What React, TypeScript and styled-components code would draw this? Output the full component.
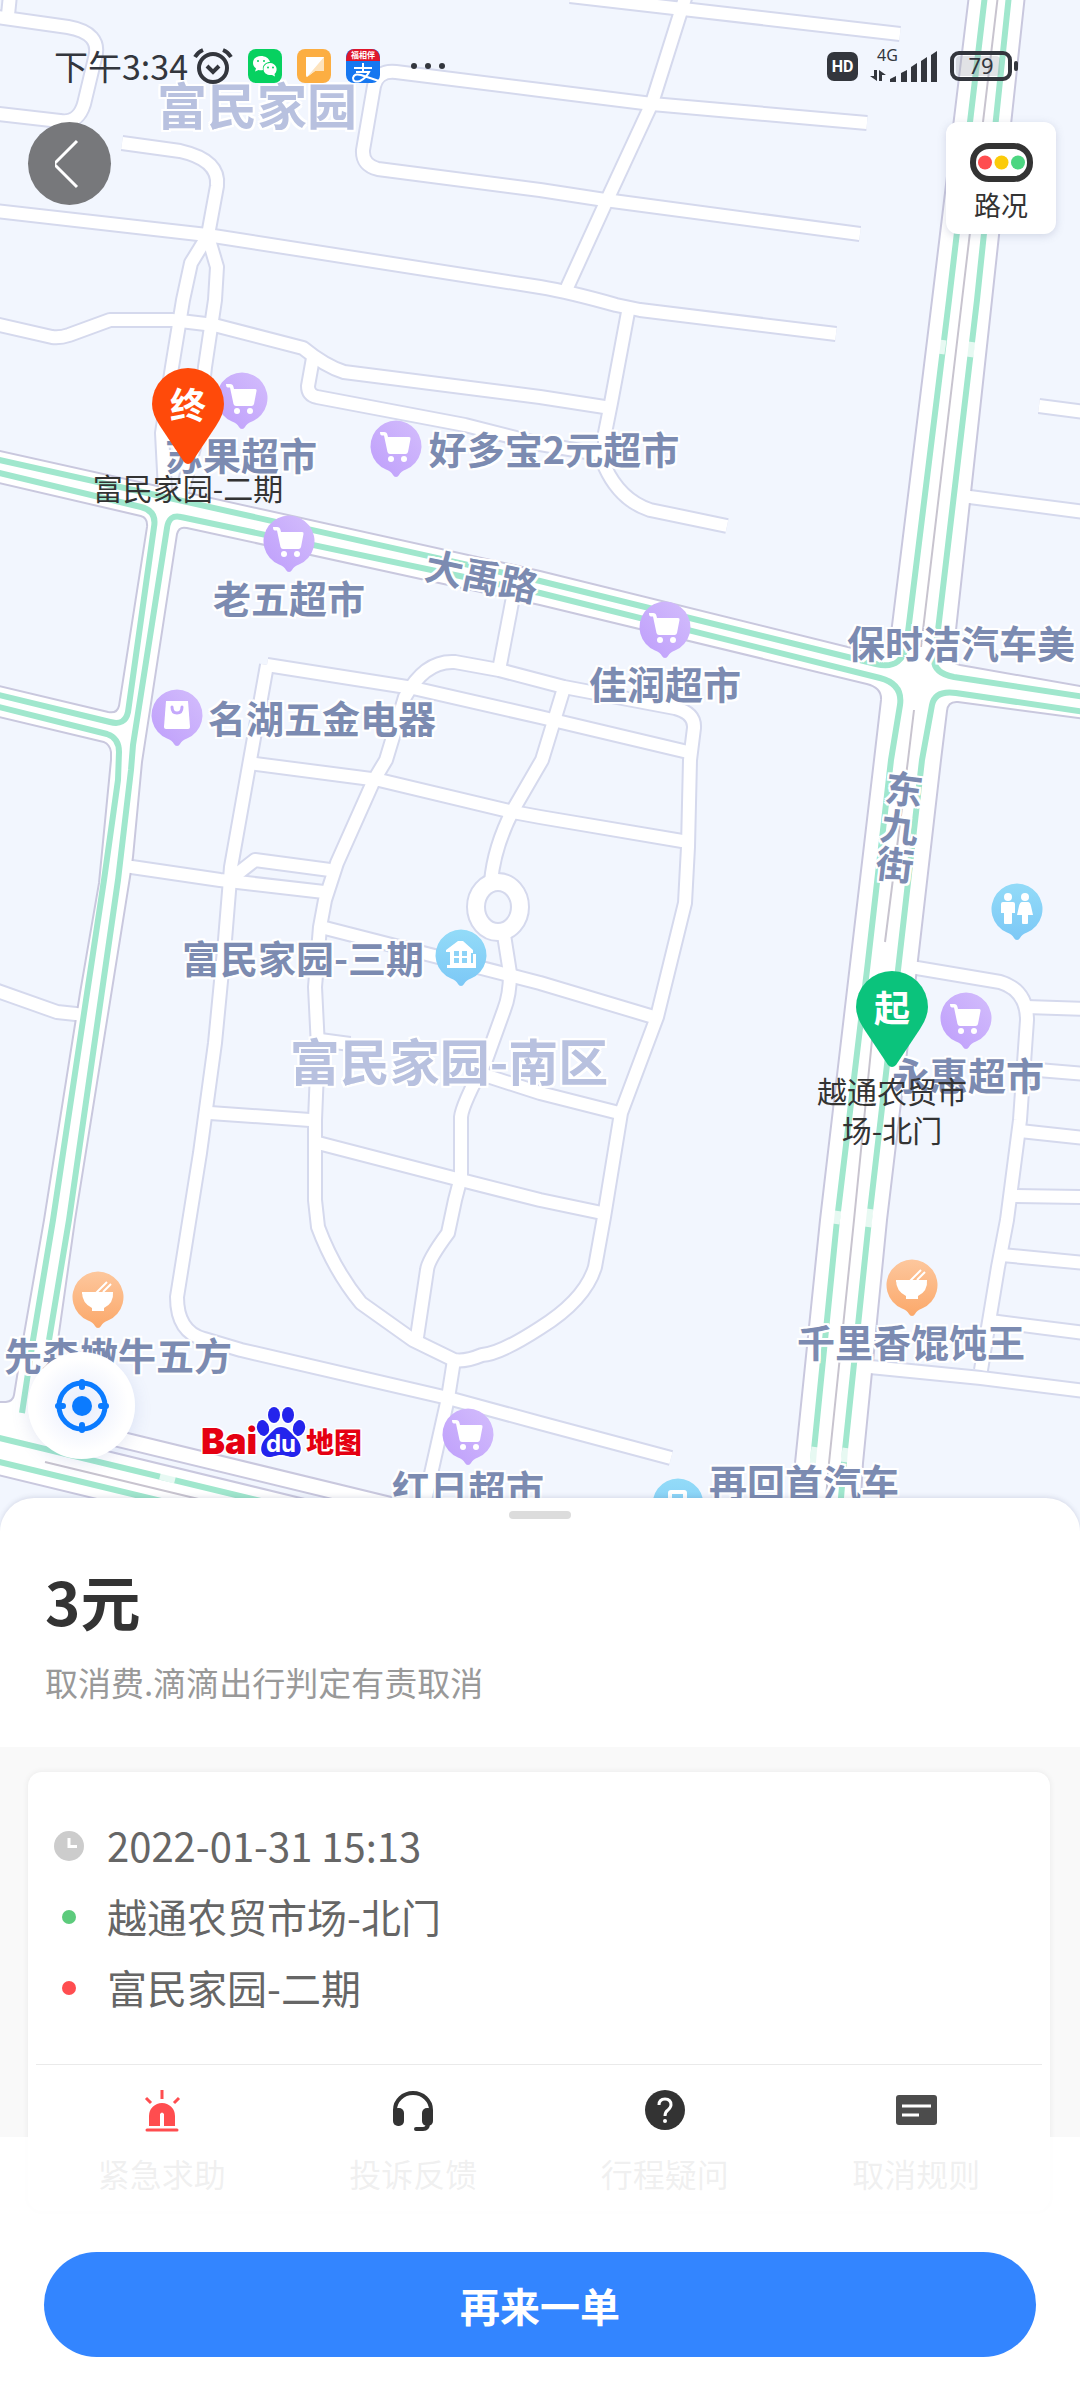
import React from "react";
import styled, { createGlobalStyle } from "styled-components";

const GlobalStyle = createGlobalStyle`
  *, *::before, *::after { box-sizing: border-box; }
  body {
    margin: 0;
    background: #fff;
    font-family: "Noto Sans CJK SC", "Noto Sans", sans-serif;
    color: #333;
  }
  button { font: inherit; color: inherit; border: 0; padding: 0; cursor: pointer; }
`;

/* ---------- layout ---------- */

const Screen = styled.main`
  display: flex;
  flex-direction: column;
  min-height: 100vh;
`;

const MapArea = styled.section`
  position: relative;
  display: flex;
  justify-content: center;
  height: 1540px;
  overflow: hidden;
  background: #f2f6fe;
`;

const MapCanvas = styled.div`
  position: relative;
  flex: none;
  width: 1080px;
`;

const StreetMap = styled.svg`
  display: block;
`;

const MapLabel = styled.span<{ $x: number; $y: number; $area?: boolean; $turn?: number; $vertical?: boolean }>`
  position: absolute;
  left: ${(p) => p.$x}px;
  top: ${(p) => p.$y}px;
  transform: translate(-50%, -50%) rotate(${(p) => p.$turn ?? 0}deg);
  writing-mode: ${(p) => (p.$vertical ? "vertical-rl" : "horizontal-tb")};
  font-size: ${(p) => (p.$area ? 50 : 38)}px;
  line-height: 1;
  font-weight: 700;
  white-space: nowrap;
  color: ${(p) => (p.$area ? "#b8c1df" : "#7c8bb1")};
  text-shadow: 2px 0 #fff, -2px 0 #fff, 0 2px #fff, 0 -2px #fff, 2px 2px #fff, -2px -2px #fff, 2px -2px #fff,
    -2px 2px #fff;
`;

const StopLabel = styled.span<{ $x: number; $y: number }>`
  position: absolute;
  left: ${(p) => p.$x}px;
  top: ${(p) => p.$y}px;
  transform: translateX(-50%);
  font-size: 30px;
  line-height: 39px;
  text-align: center;
  white-space: pre;
  color: #333;
`;

const Overlay = styled.div`
  position: absolute;
  inset: 0;
  display: flex;
  flex-direction: column;
  padding: 46px 24px 81px 28px;
`;

const StatusBar = styled.header`
  display: flex;
  justify-content: space-between;
  align-items: center;
  height: 40px;
  padding: 0 38px 0 26px;
  color: #33363d;
`;

const StatusGroup = styled.div<{ $gap: number }>`
  display: flex;
  align-items: center;
  gap: ${(p) => p.$gap}px;
`;

const Clock = styled.time`
  font-size: 34px;
  line-height: 40px;
  margin-right: -10px;
`;

const TopControls = styled.div`
  display: flex;
  justify-content: space-between;
  align-items: flex-start;
  margin-top: 36px;
`;

const BackButton = styled.button`
  display: grid;
  place-items: center;
  width: 83px;
  height: 83px;
  border-radius: 50%;
  background: #77787b;
`;

const TrafficButton = styled.button`
  display: flex;
  flex-direction: column;
  align-items: center;
  gap: 5px;
  width: 110px;
  height: 112px;
  padding-top: 21px;
  border-radius: 12px;
  background: #fff;
  box-shadow: 0 2px 8px rgba(90, 100, 140, 0.22);
  font-size: 27px;
  line-height: 36px;
`;

const BottomControls = styled.div`
  display: flex;
  align-items: flex-end;
  gap: 64px;
  margin-top: auto;
`;

const LocateButton = styled.button`
  display: grid;
  place-items: center;
  width: 107px;
  height: 107px;
  border-radius: 50%;
  background: radial-gradient(circle, #e8edfc 0%, #f6f8fe 40%, #fff 62%);
  box-shadow: 0 4px 18px rgba(80, 100, 180, 0.14);
`;

const Sheet = styled.section`
  position: relative;
  margin-top: -42px;
  flex: 1;
  border-radius: 34px 34px 0 0;
  background: #fff;
  box-shadow: 0 -1px 5px rgba(60, 70, 110, 0.16);
`;

const Handle = styled.div`
  width: 62px;
  height: 8px;
  margin: 0 auto;
  border-radius: 4px;
  background: #dcdcdc;
`;

const Summary = styled.header`
  padding: 13px 45px 41px;
`;

const Price = styled.h1`
  margin: 45px 0 0;
  font-size: 60px;
  line-height: 72px;
  font-weight: 700;
`;

const Reason = styled.p`
  margin: 22px 0 0;
  font-size: 33px;
  line-height: 48px;
  color: #999;
`;

const Details = styled.div`
  padding: 25px 30px 189px 28px;
  background: #f9f9f9;
`;

const Card = styled.article`
  padding: 38px 8px 18px;
  border-radius: 14px;
  background: #fff;
  box-shadow: 0 0 6px rgba(0, 0, 0, 0.07);
`;

const Trip = styled.ul`
  margin: 0;
  padding: 0 18px 41px;
  list-style: none;
`;

const TripRow = styled.li`
  display: grid;
  grid-template-columns: 30px 1fr;
  align-items: center;
  column-gap: 23px;
  font-size: 40px;
  line-height: 71px;
  color: #666;
`;

const Dot = styled.i<{ $color: string }>`
  justify-self: center;
  width: 14px;
  height: 14px;
  border-radius: 50%;
  background: ${(p) => p.$color};
`;

const Actions = styled.nav`
  display: grid;
  grid-template-columns: repeat(4, 1fr);
  border-top: 1px solid #eaeaea;
  padding-top: 22px;
`;

const ActionButton = styled.button`
  display: flex;
  flex-direction: column;
  align-items: center;
  gap: 18px;
  background: none;
  font-size: 32px;
  line-height: 40px;
  color: #666;
`;

const Footer = styled.footer`
  position: sticky;
  bottom: 0;
  margin-top: -263px;
  padding: 115px 44px 43px;
  background: rgba(255, 255, 255, 0.9);
`;

const PrimaryButton = styled.button`
  display: block;
  width: 100%;
  height: 105px;
  border-radius: 53px;
  background: #3385ff;
  color: #fff;
  font-size: 40px;
  font-weight: 700;
`;

/* ---------- map data ---------- */

const arterial =
  "M-5 451L540 572L884 657Q889 658 890 650L933 300L970 -5H1024L991 300L955 630L951 657Q951 664 960 666L1085 688V718L958 701Q947 700 946 711L940 760L917 960L886 1220L862 1463L857 1545H788L796 1463L821 1220L875 760L882 700Q883 687 867 683L540 604L187 527Q178 525 176 534L141 762L132 857L129 877L74 1220L57 1340L40 1440H-5V1403H6Q14 1402 15 1395L24 1340L45 1220L81 993L100 883L112 760V752Q111 744 104 741L-5 715V686L108 713Q118 715 120 706L148 527Q149 517 141 515L-5 481Z";

const streets = [
  "M10 -5L8 15",
  "M-10 16L68 27Q102 33 95 58L84 104Q78 124 60 121L-10 113",
  "M122 143L180 151Q220 160 217 186L208 235",
  "M-5 211L207 235L540 287Q570 292 616 305L640 310L836 334",
  "M207 237L191 263L183 300L172 367L162 433L165 490",
  "M209 240L217 267L215 300L205 367L198 433L180 500",
  "M867 123L652 104L540 90L396 72Q378 70 374 86L363 150Q362 165 378 169L540 190L605 200L860 234",
  "M570 -4L683 9L900 34",
  "M686 -5L652 103L607 200L566 290",
  "M-5 324L52 337Q60 338 69 335L110 320H172L214 325L303 348Q325 366 344 372L540 397L611 408",
  "M628 312L611 403L605 433V467Q620 500 650 510L727 526",
  "M313 358L308 386Q308 395 317 397L465 425L540 444L604 455",
  "M962 496L1085 512",
  "M1039 406L1085 412",
  "M513 597L499 670",
  "M267 665L413 688L540 717L692 753",
  "M267 665L250 760L231 867L225 940L215 1043L200 1153L177 1297Q177 1332 204 1339L241 1350L448 1398L540 1423L671 1458",
  "M386 760L405 697Q425 660 455 662L499 670L564 687L675 708Q695 713 694 728L690 760L688 847L685 903L657 1017L621 1113L604 1217L595 1267Q585 1300 540 1328Q500 1354 482 1355Q465 1362 454 1360L413 1340L361 1303Q334 1270 318 1227L315 1200V1120L318 1047L315 987L320 927L325 900L337 863L374 780Z",
  "M564 688L542 760L513 810Q494 847 491 882",
  "M248 763L379 780L513 812L540 817L688 842",
  "M118 865L220 880L324 892",
  "M232 878L255 860L330 870",
  "M504 935L510 973Q510 995 504 1010L486 1060Q462 1105 461 1117V1177L455 1200L448 1233Q428 1260 427 1270L417 1337",
  "M325 928L540 983L657 1018",
  "M478 1073L540 1093L619 1113",
  "M210 1113L310 1120",
  "M318 1143L461 1180L540 1200L602 1213",
  "M320 1040L350 1044",
  "M-5 990L57 1012L85 1015",
  "M454 1360L448 1398L415 1545",
  "M905 966L1000 982Q1027 990 1027 1020L1020 1120L1007 1220L998 1267L981 1370",
  "M1026 1007L1085 1009",
  "M1026 1069L1085 1074",
  "M1020 1131L1085 1138",
  "M1012 1196L1085 1197",
  "M1002 1255L1085 1263",
  "M990 1321L1085 1333",
  "M860 1366L981 1378L1085 1391",
];

const trafficLines = [
  "M-5 459L540 581L876 664Q904 671 907 640L949 300L985 -5",
  "M-5 472L141 507Q157 511 154 527L128 712Q125 726 110 722L-5 694",
  "M-5 706L107 734Q119 738 119 752L118 780L104 880L53 1220L33 1340L22 1413",
  "M49 1340L69 1220L118 880L131 770L133 745L167 528Q169 514 181 517L540 593L880 678Q903 684 900 705L891 760L867 970L837 1220L814 1450L809 1510",
  "M1085 697L954 677Q932 673 934 656L938 630L977 300L1009 -5",
  "M1085 712L956 693Q935 690 932 705L922 760L898 970L869 1220L845 1450L840 1510",
  "M-5 1437L290 1508",
  "M-5 1461L190 1508",
];

const medians = ["M998 -5L962 300L921 647", "M914 710L908 760L885 942", "M872 1040L854 1220L829 1463L825 1510", "M45 1462L240 1509"];
const lineGaps = ["M943 340L941 354", "M972 342L970 357", "M838 1211L836 1224", "M870 1209L868 1227", "M815 1447L813 1464", "M846 1448L844 1462", "M160 1476L175 1480"];

type PinKind = "cart" | "bag" | "house" | "toilet" | "bowl" | "fuel";
const pinFill: Record<PinKind, string> = {
  cart: "url(#violet)",
  bag: "url(#violet)",
  house: "url(#azure)",
  toilet: "url(#azure)",
  fuel: "url(#azure)",
  bowl: "url(#amber)",
};

const pins: { kind: PinKind; x: number; y: number }[] = [
  { kind: "cart", x: 242, y: 398 },
  { kind: "cart", x: 396, y: 446 },
  { kind: "cart", x: 289, y: 541 },
  { kind: "bag", x: 177, y: 715 },
  { kind: "cart", x: 665, y: 627 },
  { kind: "house", x: 461, y: 955 },
  { kind: "toilet", x: 1017, y: 909 },
  { kind: "cart", x: 966, y: 1018 },
  { kind: "bowl", x: 98, y: 1297 },
  { kind: "cart", x: 468, y: 1434 },
  { kind: "bowl", x: 912, y: 1285 },
  { kind: "fuel", x: 678, y: 1504 },
];

const places: { text: string; x: number; y: number; area?: boolean; turn?: number; vertical?: boolean }[] = [
  { text: "富民家园", x: 257, y: 103, area: true },
  { text: "苏果超市", x: 241, y: 454 },
  { text: "好多宝2元超市", x: 554, y: 448 },
  { text: "老五超市", x: 289, y: 597 },
  { text: "大禹路", x: 482, y: 575, turn: 12 },
  { text: "佳润超市", x: 665, y: 683 },
  { text: "保时洁汽车美", x: 961, y: 642 },
  { text: "名湖五金电器", x: 322, y: 717 },
  { text: "富民家园-三期", x: 303, y: 957 },
  { text: "富民家园-南区", x: 449, y: 1059, area: true },
  { text: "东九街", x: 899, y: 827, turn: 7, vertical: true },
  { text: "永惠超市", x: 968, y: 1074 },
  { text: "千里香馄饨王", x: 911, y: 1341 },
  { text: "先森嫩牛五方", x: 118, y: 1354 },
  { text: "红日超市", x: 468, y: 1487 },
  { text: "再回首汽车", x: 804, y: 1481 },
];

/* ---------- drawings ---------- */

function PinGlyph({ kind }: { kind: PinKind }) {
  switch (kind) {
    case "cart":
      return (
        <g fill="#fff">
          <path d="M-16 -14H-12Q-9 -14 -8.500 -11L-8 -9H13Q15 -9 14.500 -7L12 6Q11.500 8 9.500 8H-6Q-8 8 -8.500 6L-12 -10.500H-14Q-16 -10.500 -16 -14Z" />
          <circle cx="-5" cy="13" r="3" />
          <circle cx="8" cy="13" r="3" />
        </g>
      );
    case "bag":
      return (
        <g>
          <path d="M-11 -14H11L13 12Q13 14 11 14H-11Q-13 14 -13 12Z" fill="#fff" />
          <path d="M-5 -8Q-5 -2 0 -2Q5 -2 5 -8" fill="none" stroke="#c4a8fb" strokeWidth="3" strokeLinecap="round" />
        </g>
      );
    case "house":
      return (
        <g>
          <path d="M-15 -5L-3 -14H2L12 -5V-2H10V8H12V-1H15V13H-14V10H-11V-3H-15Z" fill="#fff" />
          <path d="M-7 -4H-2V1H-7ZM1 -4H6V1H1ZM-7 3H-2V8H-7ZM1 3H6V8H1Z" fill="#8dd3f7" />
        </g>
      );
    case "toilet":
      return (
        <g fill="#fff">
          <circle cx="-9" cy="-12" r="4" />
          <path d="M-14 -7H-4Q-2 -7 -2 -5V4H-5V14Q-5 15 -6 15H-12Q-13 15 -13 14V4H-16V-5Q-16 -7 -14 -7Z" />
          <circle cx="8" cy="-12" r="4" />
          <path d="M5 -7H11Q13 -7 14 -3L16 6H11V14Q11 15 10 15H6Q5 15 5 14V6H0L2 -3Q3 -7 5 -7Z" />
        </g>
      );
    case "bowl":
      return (
        <g>
          <path d="M-16 -4H-2L9 -15M5 -5L13 -13" stroke="#fff" strokeWidth="2" fill="none" />
          <path d="M-16 -5H15Q16 6 6 11V14H-6V11Q-16 6 -16 -5Z" fill="#fff" />
        </g>
      );
    case "fuel":
      return <path d="M-10 12V-11Q-10 -14 -7 -14H6Q9 -14 9 -11V12ZM-6 -10V-2H5V-10Z" fill="#fff" fillRule="evenodd" />;
  }
}

function Streets() {
  return (
    <StreetMap width="1080" height="1540" viewBox="0 0 1080 1540" aria-hidden="true">
      <defs>
        <linearGradient id="violet" x1="1" y1="0" x2="0" y2="1">
          <stop offset="0" stopColor="#d3bdfc" />
          <stop offset="1" stopColor="#be9efb" />
        </linearGradient>
        <linearGradient id="azure" x1="0" y1="0" x2="0" y2="1">
          <stop offset="0" stopColor="#93dbf8" />
          <stop offset="1" stopColor="#7cc8f6" />
        </linearGradient>
        <linearGradient id="amber" x1="0" y1="0" x2="0" y2="1">
          <stop offset="0" stopColor="#fdc79d" />
          <stop offset="1" stopColor="#fba86a" />
        </linearGradient>
      </defs>

      <g fill="none" stroke="#d5d9ed" strokeWidth="16" strokeLinejoin="round">
        {streets.map((d) => <path key={d} d={d} />)}
        <ellipse cx="498" cy="907" rx="22" ry="25" strokeWidth="20" />
      </g>
      <g fill="none" stroke="#c9c8de" strokeLinejoin="round">
        <path d={arterial} strokeWidth="4" />
        <path d="M-5 1409L440 1517" strokeWidth="18" />
        <path d="M-5 1449L300 1523" strokeWidth="51" />
      </g>
      <g fill="none" stroke="#fff" strokeWidth="12" strokeLinejoin="round">
        {streets.map((d) => <path key={d} d={d} />)}
        <ellipse cx="498" cy="907" rx="22" ry="25" strokeWidth="16" />
        <path d={arterial} fill="#fff" stroke="none" />
        <path d="M-5 1409L440 1517" strokeWidth="14" />
        <path d="M-5 1449L300 1523" strokeWidth="47" />
      </g>
      <g fill="none" stroke="#a0e7cd" strokeWidth="6" strokeLinejoin="round">
        {trafficLines.map((d) => <path key={d} d={d} />)}
      </g>
      <g fill="none" stroke="#c8c4cf" strokeWidth="2">
        {medians.map((d) => <path key={d} d={d} />)}
      </g>
      <g fill="none" stroke="#fff" strokeWidth="7" opacity="0.750">
        {lineGaps.map((d) => <path key={d} d={d} />)}
      </g>
      {pins.map((p) => (
        <g key={`${p.x}-${p.y}`} transform={`translate(${p.x} ${p.y})`}>
          <path d="M0 31Q-2 31 -3 29Q-5 25 -10 23.500A25.500 25.500 0 1 1 10 23.500Q5 25 3 29Q2 31 0 31Z" fill={pinFill[p.kind]} />
          <PinGlyph kind={p.kind} />
        </g>
      ))}
    </StreetMap>
  );
}

const StopPin = styled.div<{ $x: number; $y: number; $color: string }>`
  position: absolute;
  left: ${(p) => p.$x}px;
  top: ${(p) => p.$y}px;
  width: 72px;
  height: 98px;
  margin-left: -36px;
  color: #fff;
  font-size: 36px;
  font-weight: 700;
  line-height: 70px;
  text-align: center;
  svg { position: absolute; inset: 0; fill: ${(p) => p.$color}; }
  span { position: relative; }
`;

function Stop({ x, y, color, text }: { x: number; y: number; color: string; text: string }) {
  return (
    <StopPin $x={x} $y={y} $color={color}>
      <svg width="72" height="98" viewBox="0 0 72 98" aria-hidden="true">
        <path d="M36 0A36 36 0 0 1 72 36Q72 46 64 58L40 94Q36 98 32 94L8 58Q0 46 0 36A36 36 0 0 1 36 0Z" />
      </svg>
      <span>{text}</span>
    </StopPin>
  );
}

const AlarmIcon = () => (
  <svg width="40" height="38" viewBox="0 0 40 38" fill="none" stroke="#33363d" strokeWidth="4" aria-label="闹钟">
    <circle cx="20" cy="21" r="14" />
    <path d="M2 10Q5 5 10 3M38 10Q35 5 30 3" />
    <path d="M14 19L20 25L26 19" />
  </svg>
);

const WeChatIcon = () => (
  <svg width="34" height="34" viewBox="0 0 34 34" aria-label="微信">
    <rect width="34" height="34" rx="8" fill="#07d160" />
    <path d="M13 7C8 7 5 10 5 14C5 16 6 18 8 19.500L7 22.500L10.500 21Q13 21.500 15 21C14 16 18 13 22 13C21 9 17 7 13 7Z" fill="#fff" />
    <path d="M22 14C18 14 15.500 17 15.500 20C15.500 24 19 26.500 24 26L27 27.500L26.500 25C31 21 28 14 22 14Z" fill="#fff" />
    <g fill="#07d160"><circle cx="10" cy="12" r="1" /><circle cx="16" cy="12" r="1" /><circle cx="20" cy="18.500" r="1" /><circle cx="25" cy="18.500" r="1" /></g>
  </svg>
);

const NoteIcon = () => (
  <svg width="34" height="34" viewBox="0 0 34 34" aria-label="消息">
    <rect width="34" height="34" rx="8" fill="#fcae42" />
    <path d="M9 8H27V22H18L10 28Q9 28 9 26Z" fill="#fff" />
    <path d="M27 8V22H18L10 28Z" fill="#fde3bd" />
  </svg>
);

const AlipayIcon = () => (
  <svg width="34" height="34" viewBox="0 0 34 34" aria-label="支付宝">
    <rect width="34" height="34" rx="8" fill="#1677f0" />
    <path d="M0 12Q0 0 9 0H25Q34 0 34 12Z" fill="#e0162b" />
    <text x="17" y="9" fontSize="8" fontWeight="700" fill="#fff" textAnchor="middle">福相伴</text>
    <path d="M8 19H26M17 14V23M10 23H23Q20 29 14 32Q7 34 7 29Q8 24 15 26Q24 29 33 32" fill="none" stroke="#fff" strokeWidth="2" />
  </svg>
);

const MoreIcon = () => (
  <svg width="36" height="8" viewBox="0 0 36 8" fill="#33363d" aria-label="更多通知">
    <circle cx="4" cy="4" r="3" /><circle cx="18" cy="4" r="3" /><circle cx="32" cy="4" r="3" />
  </svg>
);

const HdIcon = () => (
  <svg width="31" height="29" viewBox="0 0 31 29" aria-label="HD">
    <rect width="31" height="29" rx="7" fill="#33363d" />
    <text x="15.500" y="20" fontSize="16" fontWeight="700" fill="#fff" textAnchor="middle" fontFamily="Roboto, sans-serif">HD</text>
  </svg>
);

const SignalIcon = () => (
  <svg width="68" height="44" viewBox="0 -5 68 44" fill="#33363d" aria-label="4G">
    <text x="7" y="12" fontSize="16" fontFamily="Noto Sans, sans-serif">4G</text>
    <path d="M4 21H7V32L0 27H4ZM9 21L16 26H12V32H9Z" />
    <path d="M20 33V30L26 27V33ZM31 33V24L37 21V33ZM41 33V18L47 14V33ZM51 33V12L57 8V33ZM61 33V6L67 2V33Z" />
  </svg>
);

const BatteryIcon = () => (
  <svg width="68" height="30" viewBox="0 0 68 30" aria-label="电量 79">
    <rect x="6" y="5" width="44" height="20" rx="4" fill="#a9adb4" opacity="0.350" />
    <rect x="2" y="2" width="58" height="26" rx="7" fill="none" stroke="#33363d" strokeWidth="4" />
    <rect x="64" y="10" width="4" height="10" rx="2" fill="#33363d" />
    <text x="31" y="23" fontSize="22" textAnchor="middle" fill="#33363d" fontFamily="Noto Sans, sans-serif">79</text>
  </svg>
);

const BackIcon = () => (
  <svg width="30" height="52" viewBox="0 0 30 52" fill="none" stroke="#fff" strokeWidth="3" aria-hidden="true">
    <path d="M22 3L-1 26L22 49" />
  </svg>
);

const TrafficIcon = () => (
  <svg width="63" height="39" viewBox="0 0 63 39" aria-hidden="true">
    <rect x="3" y="3" width="57" height="33" rx="16" fill="#fff" stroke="#333" strokeWidth="6" />
    <circle cx="15" cy="19.500" r="7" fill="#ff4d4f" />
    <circle cx="31.500" cy="19.500" r="7" fill="#fbcb0a" />
    <circle cx="48" cy="19.500" r="7" fill="#4cd681" />
  </svg>
);

const LocateIcon = () => (
  <svg width="56" height="56" viewBox="0 0 56 56" fill="none" stroke="#0b7bff" aria-hidden="true">
    <circle cx="28" cy="28" r="23" strokeWidth="5" />
    <path d="M28 4V9M28 47V52M4 28H9M47 28H52" strokeWidth="6" strokeLinecap="round" />
    <circle cx="28" cy="28" r="10" fill="#0b7bff" stroke="none" />
  </svg>
);

const BaiduLogo = () => (
  <svg width="166" height="64" viewBox="-2 -4 166 64" role="img" aria-label="百度地图">
    <g stroke="#fff" strokeWidth="3" paintOrder="stroke" strokeLinejoin="round">
      <text x="0" y="55" fontSize="36" fontWeight="900" fill="#e50012" fontFamily="Inter, Liberation Sans, sans-serif">Bai</text>
      <g fill="#2424ec">
        <ellipse cx="62" cy="29" rx="6" ry="8" transform="rotate(-15 62 29)" />
        <ellipse cx="73" cy="16" rx="6" ry="8" />
        <ellipse cx="87" cy="16" rx="6" ry="8" />
        <ellipse cx="98" cy="29" rx="6" ry="8" transform="rotate(15 98 29)" />
        <path d="M80 28C86 28 89 33 94 38C101 44 103 57 92 58C87 58 85 56 80 56C75 56 73 58 68 58C57 57 59 44 66 38C71 33 74 28 80 28Z" />
      </g>
      <text x="105" y="54" fontSize="28" fontWeight="900" fill="#e50012">地图</text>
    </g>
    <text x="80" y="53" fontSize="24" fontWeight="700" fill="#fff" textAnchor="middle" fontFamily="Inter, Liberation Sans, sans-serif">du</text>
  </svg>
);

const TimeIcon = () => (
  <svg width="30" height="30" viewBox="0 0 30 30" aria-hidden="true">
    <circle cx="15" cy="15" r="15" fill="#ccc" />
    <path d="M15 7V15.500H23" fill="none" stroke="#fff" strokeWidth="3" />
  </svg>
);

const SirenIcon = () => (
  <svg width="48" height="48" viewBox="0 0 48 48" aria-hidden="true">
    <g stroke="#ff4d4f" strokeWidth="3">
      <path d="M24 3V12M8 11L13 16M41 11L36 16" />
      <path d="M9 43H39" strokeLinecap="round" />
    </g>
    <path d="M11 39V29A13 13 0 0 1 37 29V39H26V27Q24 24 22 27V39Z" fill="#ff4d4f" />
  </svg>
);

const HeadsetIcon = () => (
  <svg width="48" height="48" viewBox="0 0 48 48" fill="none" stroke="#333" aria-hidden="true">
    <path d="M6 26V23A18 17 0 0 1 42 23V26" strokeWidth="4" />
    <rect x="4" y="21" width="11" height="18" rx="5" fill="#333" stroke="none" />
    <rect x="33" y="21" width="11" height="18" rx="5" fill="#333" stroke="none" />
    <path d="M39 36Q39 42 34 42H27" strokeWidth="4" strokeLinecap="round" />
  </svg>
);

const QuestionIcon = () => (
  <svg width="48" height="48" viewBox="0 0 48 48" aria-hidden="true">
    <circle cx="24" cy="23" r="20" fill="#333" />
    <path d="M18 18Q18 12 24 12Q30 12 30 18Q30 20 27 23Q24 25 24 29" fill="none" stroke="#fff" strokeWidth="3" />
    <circle cx="24" cy="34" r="2" fill="#fff" />
  </svg>
);

const RulesIcon = () => (
  <svg width="48" height="48" viewBox="0 0 48 48" aria-hidden="true">
    <rect x="4" y="8" width="41" height="30" rx="3" fill="#4c4c4c" />
    <path d="M10 19H39M10 28H27" stroke="#fff" strokeWidth="3" />
  </svg>
);

const actions = [
  { label: "紧急求助", Icon: SirenIcon },
  { label: "投诉反馈", Icon: HeadsetIcon },
  { label: "行程疑问", Icon: QuestionIcon },
  { label: "取消规则", Icon: RulesIcon },
];

/* ---------- page ---------- */

export default function App() {
  return (
    <Screen>
      <GlobalStyle />
      <MapArea>
        <MapCanvas>
          <Streets />
          {places.map((p) => (
            <MapLabel key={p.text} $x={p.x} $y={p.y} $area={p.area} $turn={p.turn} $vertical={p.vertical}>
              {p.text}
            </MapLabel>
          ))}
          <Stop x={188} y={368} color="#ff4a0a" text="终" />
          <StopLabel $x={188} $y={468}>富民家园-二期</StopLabel>
          <Stop x={892} y={971} color="#0bc37c" text="起" />
          <StopLabel $x={892} $y={1071}>{"越通农贸市\n场-北门"}</StopLabel>
        </MapCanvas>
        <Overlay>
          <StatusBar>
            <StatusGroup $gap={15}>
              <Clock dateTime="15:34">下午3:34</Clock>
              <AlarmIcon />
              <WeChatIcon />
              <NoteIcon />
              <AlipayIcon />
              <span />
              <MoreIcon />
            </StatusGroup>
            <StatusGroup $gap={12}>
              <HdIcon />
              <SignalIcon />
              <BatteryIcon />
            </StatusGroup>
          </StatusBar>
          <TopControls>
            <BackButton type="button" aria-label="返回">
              <BackIcon />
            </BackButton>
            <TrafficButton type="button">
              <TrafficIcon />
              路况
            </TrafficButton>
          </TopControls>
          <BottomControls>
            <LocateButton type="button" aria-label="定位">
              <LocateIcon />
            </LocateButton>
            <BaiduLogo />
          </BottomControls>
        </Overlay>
      </MapArea>

      <Sheet>
        <Summary>
          <Handle />
          <Price>3元</Price>
          <Reason>取消费.滴滴出行判定有责取消</Reason>
        </Summary>
        <Details>
          <Card>
            <Trip>
              <TripRow>
                <TimeIcon />
                <time dateTime="2022-01-31T15:13">2022-01-31 15:13</time>
              </TripRow>
              <TripRow>
                <Dot $color="#5ccb7c" />
                越通农贸市场-北门
              </TripRow>
              <TripRow>
                <Dot $color="#ff4d50" />
                富民家园-二期
              </TripRow>
            </Trip>
            <Actions>
              {actions.map(({ label, Icon }) => (
                <ActionButton key={label} type="button">
                  <Icon />
                  {label}
                </ActionButton>
              ))}
            </Actions>
          </Card>
        </Details>
      </Sheet>
      <Footer>
        <PrimaryButton type="button">再来一单</PrimaryButton>
      </Footer>
    </Screen>
  );
}
